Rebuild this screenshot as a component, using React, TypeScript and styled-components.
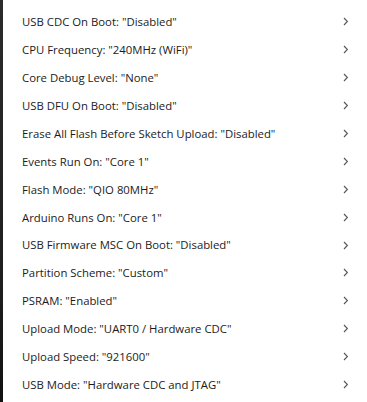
import React from "react";
import styled, { createGlobalStyle } from "styled-components";

const Global = createGlobalStyle`
  html, body { margin: 0; padding: 0; background: #ffffff; }
  body { font-family: "Open Sans", "Noto Sans", sans-serif; }
`;

const Frame = styled.div`
  display: flex;
  width: 367px;
  height: 402px;
  overflow: hidden;
  background: #ffffff;
`;

const Edge = styled.div`
  width: 3px;
  flex: none;
  background: linear-gradient(#2b2b2b, #1f1f1f 70%, #111111);
`;

const Menu = styled.ul`
  list-style: none;
  margin: 0;
  padding: 8px 0 0 0;
  flex: 1;
  display: flex;
  flex-direction: column;
`;

const Item = styled.li`
  height: 27.9px;
  display: flex;
  align-items: center;
  justify-content: space-between;
  padding: 0 18px 0 19px;
  font-size: 11.35px;
  color: #1b1b1b;
  white-space: nowrap;
`;

const Label = styled.span`
  line-height: 1;
`;

const Chevron = styled.svg`
  width: 6px;
  height: 9px;
  flex: none;
`;

const items = [
  'USB CDC On Boot: "Disabled"',
  'CPU Frequency: "240MHz (WiFi)"',
  'Core Debug Level: "None"',
  'USB DFU On Boot: "Disabled"',
  'Erase All Flash Before Sketch Upload: "Disabled"',
  'Events Run On: "Core 1"',
  'Flash Mode: "QIO 80MHz"',
  'Arduino Runs On: "Core 1"',
  'USB Firmware MSC On Boot: "Disabled"',
  'Partition Scheme: "Custom"',
  'PSRAM: "Enabled"',
  'Upload Mode: "UART0 / Hardware CDC"',
  'Upload Speed: "921600"',
  'USB Mode: "Hardware CDC and JTAG"',
];

export default function App() {
  return (
    <>
      <Global />
      <Frame>
        <Edge />
        <Menu>
          {items.map((t) => (
            <Item key={t}>
              <Label>{t}</Label>
              <Chevron viewBox="0 0 6 9">
                <path d="M1 1 L4.4 4.5 L1 8" fill="none" stroke="#555" strokeWidth="1.1" />
              </Chevron>
            </Item>
          ))}
        </Menu>
      </Frame>
    </>
  );
}
